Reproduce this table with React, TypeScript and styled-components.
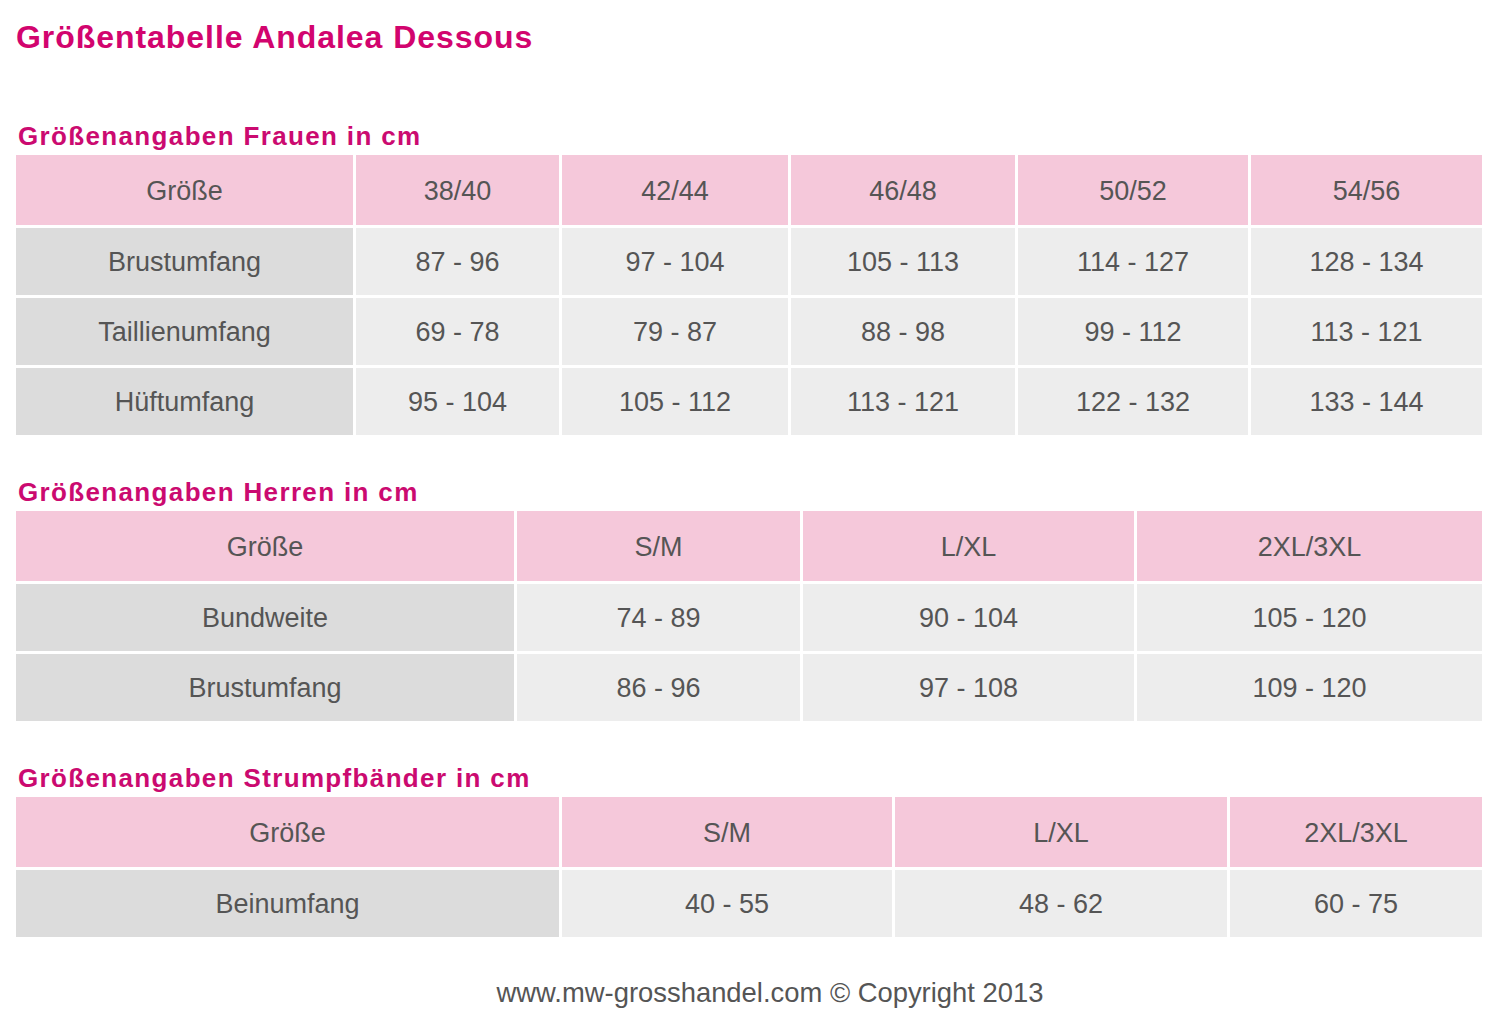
import React from "react";
import styled, { createGlobalStyle } from "styled-components";

const Global = createGlobalStyle`
  html, body { margin: 0; padding: 0; background: #ffffff; }
  body { font-family: "Liberation Sans", Arial, sans-serif; }
`;

const Page = styled.div`
  width: 1500px;
  height: 1020px;
  box-sizing: border-box;
  padding: 19px 18px 0 16px;
  background: #fff;
  display: flex;
  flex-direction: column;
`;

const Title = styled.h1`
  margin: 0 0 66px 0;
  font-family: "Liberation Sans", Arial, sans-serif;
  font-weight: bold;
  font-size: 32px;
  line-height: 36px;
  letter-spacing: 0.95px;
  color: #d2046e;
`;

const Section = styled.section`
  display: flex;
  flex-direction: column;
  margin-bottom: 42px;
`;

const Heading = styled.h2`
  margin: 0 0 4px 2px;
  font-family: "Liberation Sans", Arial, sans-serif;
  font-weight: bold;
  font-size: 26px;
  line-height: 30px;
  letter-spacing: 1.35px;
  color: #cb0a70;
`;

const Grid = styled.div<{ $cols: string; $rows: string }>`
  display: grid;
  grid-template-columns: ${(p) => p.$cols};
  grid-template-rows: ${(p) => p.$rows};
  gap: 3px;
  width: 1466px;
`;

const Cell = styled.div<{ $kind: "head" | "label" | "data" }>`
  display: flex;
  align-items: center;
  justify-content: center;
  padding-top: 2px;
  font-family: "Liberation Sans", Arial, sans-serif;
  font-size: 27px;
  color: #555555;
  background: ${(p) =>
    p.$kind === "head" ? "#f5c8da" : p.$kind === "label" ? "#dcdcdc" : "#ededed"};
`;

const Footer = styled.div`
  margin-top: -2px;
  padding-left: 42px;
  text-align: center;
  font-family: "Liberation Sans", Arial, sans-serif;
  font-size: 27.4px;
  line-height: 32px;
  color: #555555;
`;

type TableDef = {
  title: string;
  cols: string;
  head: string[];
  rows: string[][];
};

const tables: TableDef[] = [
  {
    title: "Größenangaben Frauen in cm",
    cols: "337px 203px 226px 224px 230px 231px",
    head: ["Größe", "38/40", "42/44", "46/48", "50/52", "54/56"],
    rows: [
      ["Brustumfang", "87 - 96", "97 - 104", "105 - 113", "114 - 127", "128 - 134"],
      ["Taillienumfang", "69 - 78", "79 - 87", "88 - 98", "99 - 112", "113 - 121"],
      ["Hüftumfang", "95 - 104", "105 - 112", "113 - 121", "122 - 132", "133 - 144"],
    ],
  },
  {
    title: "Größenangaben Herren in cm",
    cols: "498px 283px 331px 345px",
    head: ["Größe", "S/M", "L/XL", "2XL/3XL"],
    rows: [
      ["Bundweite", "74 - 89", "90 - 104", "105 - 120"],
      ["Brustumfang", "86 - 96", "97 - 108", "109 - 120"],
    ],
  },
  {
    title: "Größenangaben Strumpfbänder in cm",
    cols: "543px 330px 332px 252px",
    head: ["Größe", "S/M", "L/XL", "2XL/3XL"],
    rows: [["Beinumfang", "40 - 55", "48 - 62", "60 - 75"]],
  },
];

function SizeTable({ t }: { t: TableDef }) {
  const rowsTpl = ["70px", ...t.rows.map(() => "67px")].join(" ");
  return (
    <Section>
      <Heading>{t.title}</Heading>
      <Grid $cols={t.cols} $rows={rowsTpl}>
        {t.head.map((h, i) => (
          <Cell key={"h" + i} $kind="head">
            {h}
          </Cell>
        ))}
        {t.rows.map((r, ri) =>
          r.map((c, ci) => (
            <Cell key={ri + "-" + ci} $kind={ci === 0 ? "label" : "data"}>
              {c}
            </Cell>
          ))
        )}
      </Grid>
    </Section>
  );
}

export default function App() {
  return (
    <>
      <Global />
      <Page>
        <Title>Größentabelle Andalea Dessous</Title>
        {tables.map((t) => (
          <SizeTable key={t.title} t={t} />
        ))}
        <Footer>www.mw-grosshandel.com © Copyright 2013</Footer>
      </Page>
    </>
  );
}
